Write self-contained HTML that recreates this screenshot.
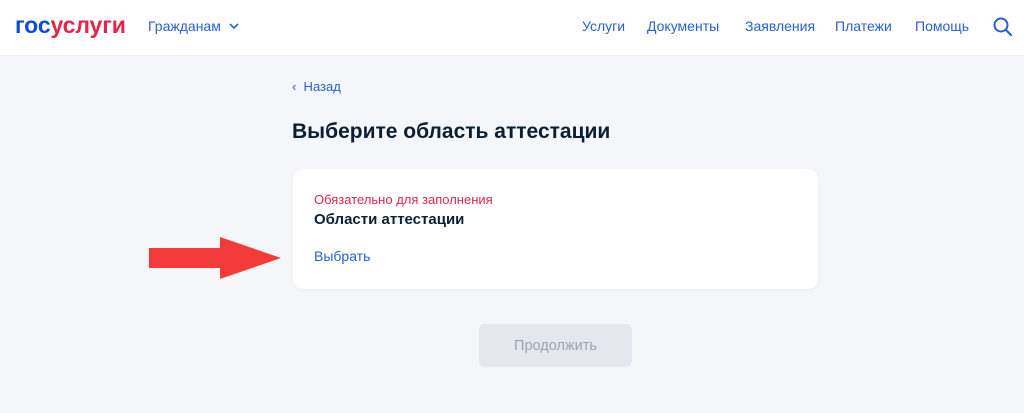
<!DOCTYPE html>
<html><head><meta charset="utf-8"><style>
body{margin:0;width:1024px;height:413px;background:#f5f6fa;font-family:"Liberation Sans","Noto Sans CJK SC",sans-serif;position:relative;overflow:hidden}
.hdr{position:absolute;left:0;top:0;width:1024px;height:55px;background:#fff;border-bottom:1px solid #eceef3}
.a{position:absolute;white-space:nowrap}
.nav{color:#2a5fcf;font-size:14px;top:18px}
</style></head><body>
<div class="hdr">
<div class="a" style="left:15px;top:12px;font-size:23px;font-weight:bold;letter-spacing:-0.1px"><span style="color:#0d4cd3">гос</span><span style="color:#e3254b">услуги</span></div>
<div class="a nav" style="left:148px">Гражданам</div>
<svg class="a" style="left:229px;top:22px" width="10" height="8"><path d="M1 2l4 4 4-4" fill="none" stroke="#2a5fcf" stroke-width="1.6"/></svg>
<div class="a nav" style="left:582px">Услуги</div>
<div class="a nav" style="left:647px">Документы</div>
<div class="a nav" style="left:745px">Заявления</div>
<div class="a nav" style="left:835px">Платежи</div>
<div class="a nav" style="left:915px">Помощь</div>
<svg class="a" style="left:992px;top:16px" width="22" height="22"><circle cx="9" cy="9" r="6.5" fill="none" stroke="#2a5fcf" stroke-width="2"/><path d="M14 14l5 5" stroke="#2a5fcf" stroke-width="2.2" stroke-linecap="round"/></svg>
</div>
<div class="a" style="left:292px;top:79px;font-size:13px;color:#2a5fcf">‹&nbsp; Назад</div>
<div class="a" style="left:292px;top:120px;font-size:21px;font-weight:bold;color:#0b1f33">Выберите область аттестации</div>
<div class="a" style="left:293px;top:169px;width:525px;height:120px;background:#fff;border-radius:10px;box-shadow:0 1px 4px rgba(0,0,0,0.05)"></div>
<div class="a" style="left:314px;top:192px;font-size:13px;color:#e3254b">Обязательно для заполнения</div>
<div class="a" style="left:314px;top:211px;font-size:15px;font-weight:bold;color:#0b1f33">Области аттестации</div>
<div class="a" style="left:314px;top:248px;font-size:14px;color:#2a5fcf">Выбрать</div>
<svg class="a" style="left:148px;top:236px" width="136" height="46"><path d="M1 12H72V1L133 22 72 43V32H1Z" fill="#f43a3a"/></svg>
<div class="a" style="left:479px;top:324px;width:153px;height:43px;background:#e4e8ee;border-radius:6px;color:#9aa4b0;font-size:14.5px;text-align:center;line-height:45px">Продолжить</div>
</body></html>
